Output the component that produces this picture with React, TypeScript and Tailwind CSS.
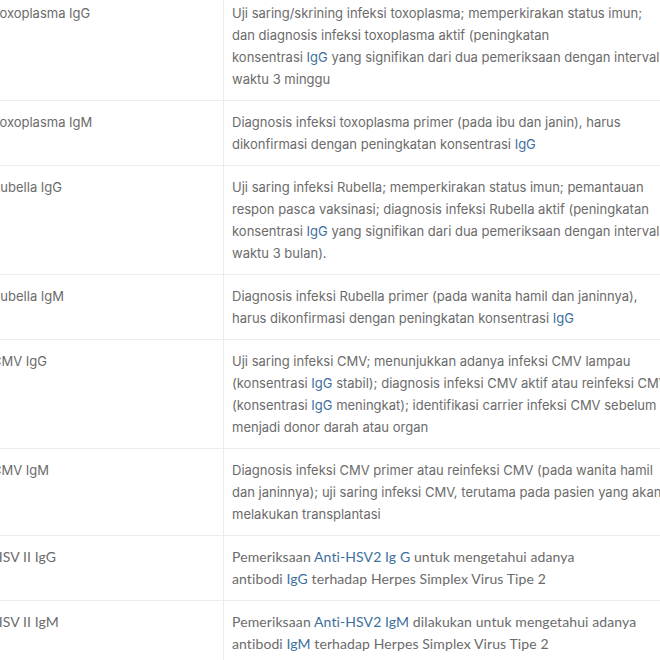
import React from "react";

type Seg = string | { b: string };
type Row = { name: string; lines: Seg[][]; alt?: boolean };

const L = (s: string) => ({ b: s });

const rows: Row[] = [
  {
    name: "Toxoplasma IgG",
    lines: [
      ["Uji saring/skrining infeksi toxoplasma; memperkirakan status imun;"],
      ["dan diagnosis infeksi toxoplasma aktif (peningkatan"],
      ["konsentrasi ", L("IgG"), " yang signifikan dari dua pemeriksaan dengan interval"],
      ["waktu 3 minggu"],
    ],
  },
  {
    name: "Toxoplasma IgM",
    lines: [
      ["Diagnosis infeksi toxoplasma primer (pada ibu dan janin), harus"],
      ["dikonfirmasi dengan peningkatan konsentrasi ", L("IgG")],
    ],
  },
  {
    name: "Rubella IgG",
    lines: [
      ["Uji saring infeksi Rubella; memperkirakan status imun; pemantauan"],
      ["respon pasca vaksinasi; diagnosis infeksi Rubella aktif (peningkatan"],
      ["konsentrasi ", L("IgG"), " yang signifikan dari dua pemeriksaan dengan interval"],
      ["waktu 3 bulan)."],
    ],
  },
  {
    name: "Rubella IgM",
    lines: [
      ["Diagnosis infeksi Rubella primer (pada wanita hamil dan janinnya),"],
      ["harus dikonfirmasi dengan peningkatan konsentrasi ", L("IgG")],
    ],
  },
  {
    name: "CMV IgG",
    lines: [
      ["Uji saring infeksi CMV; menunjukkan adanya infeksi CMV lampau"],
      ["(konsentrasi ", L("IgG"), " stabil); diagnosis infeksi CMV aktif atau reinfeksi CMV"],
      ["(konsentrasi ", L("IgG"), " meningkat); identifikasi carrier infeksi CMV sebelum"],
      ["menjadi donor darah atau organ"],
    ],
  },
  {
    name: "CMV IgM",
    lines: [
      ["Diagnosis infeksi CMV primer atau reinfeksi CMV (pada wanita hamil"],
      ["dan janinnya); uji saring infeksi CMV, terutama pada pasien yang akan"],
      ["melakukan transplantasi"],
    ],
  },
  {
    name: "HSV II IgG",
    alt: true,
    lines: [
      ["Pemeriksaan ", L("Anti-HSV2 Ig G"), " untuk mengetahui adanya"],
      ["antibodi ", L("IgG"), " terhadap Herpes Simplex Virus Tipe 2"],
    ],
  },
  {
    name: "HSV II IgM",
    alt: true,
    lines: [
      ["Pemeriksaan ", L("Anti-HSV2 IgM"), " dilakukan untuk mengetahui adanya"],
      ["antibodi ", L("IgM"), " terhadap Herpes Simplex Virus Tipe 2"],
    ],
  },
];

export default function App() {
  return (
    <div className="w-[660px] h-[660px] overflow-hidden bg-white text-[#6b6b6b]">
      <div className="-ml-[17px] -mt-[8px] w-[800px]">
        {rows.map((r, i) => {
          const font = r.alt
            ? "font-['Lato',sans-serif] text-[14px] tracking-[0.1px]"
            : "font-['Inter',sans-serif] text-[13px]";
          return (
            <div key={i} className="flex border-b border-[#ececec]">
              <div className={`w-[241px] shrink-0 border-r border-[#ececec] pl-[9px] py-[10px] leading-[22px] ${font}`}>
                {r.name}
              </div>
              <div className={`flex-1 pl-[8px] py-[10px] leading-[22px] whitespace-nowrap ${font}`}>
                {r.lines.map((ln, j) => (
                  <div key={j}>
                    {ln.map((s, k) =>
                      typeof s === "string" ? (
                        <span key={k}>{s}</span>
                      ) : (
                        <span key={k} className="text-[#3d6f9e]">
                          {s.b}
                        </span>
                      )
                    )}
                  </div>
                ))}
              </div>
            </div>
          );
        })}
      </div>
    </div>
  );
}
